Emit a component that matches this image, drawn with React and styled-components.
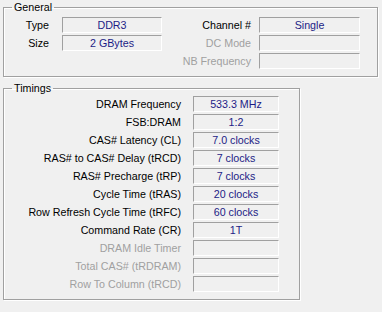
import React from "react";
import styled, { createGlobalStyle } from "styled-components";

const Global = createGlobalStyle`
  html, body { margin: 0; padding: 0; background: #f0f0f0; }
  body { font-family: "Liberation Sans", Arial, sans-serif; font-size: 10.7px; }
`;

const Page = styled.div`
  width: 382px;
  height: 312px;
  background: #f0f0f0;
  padding: 1px 0 0 3px;
  box-sizing: border-box;
  display: flex;
  flex-direction: column;
  gap: 5px;
`;

const Group = styled.fieldset`
  margin: 0;
  padding: 0;
  width: ${(p) => p.$w}px;
  height: ${(p) => p.$h}px;
  box-sizing: border-box;
  border: 1px solid #a0a0a0;
  box-shadow: inset 1px 1px 0 #fff, 1px 1px 0 #fff;
  min-width: 0;
`;

const Legend = styled.legend`
  margin-left: 8px;
  padding: 0 2px;
  font-size: 10.7px;
  line-height: 13px;
  color: #000;
`;

const GeneralGrid = styled.div`
  display: grid;
  grid-template-columns: 45px 113px 89px 109px;
  grid-auto-rows: 16px;
  row-gap: 2px;
  padding-top: 3px;
`;

const TimingsGrid = styled.div`
  display: grid;
  grid-template-columns: 177px 98px;
  grid-auto-rows: 16px;
  row-gap: 2px;
  padding-top: 1px;
`;

const Label = styled.div`
  text-align: right;
  line-height: 16px;
  white-space: nowrap;
  color: ${(p) => (p.$off ? "#a0a0a0" : "#000")};
`;

const Field = styled.div`
  box-sizing: border-box;
  height: 16px;
  border-top: 1px solid #a0a0a0;
  border-left: 1px solid #a0a0a0;
  border-right: 1px solid #fff;
  border-bottom: 1px solid #fff;
  background: #f0f0f0;
  color: #1c1c86;
  text-align: center;
  line-height: 14px;
  white-space: nowrap;
  margin-left: ${(p) => p.$ml || 0}px;
`;

const Empty = styled.div``;

const timings = [
  ["DRAM Frequency", "533.3 MHz"],
  ["FSB:DRAM", "1:2"],
  ["CAS# Latency (CL)", "7.0 clocks"],
  ["RAS# to CAS# Delay (tRCD)", "7 clocks"],
  ["RAS# Precharge (tRP)", "7 clocks"],
  ["Cycle Time (tRAS)", "20 clocks"],
  ["Row Refresh Cycle Time (tRFC)", "60 clocks"],
  ["Command Rate (CR)", "1T"],
  ["DRAM Idle Timer", "", true],
  ["Total CAS# (tRDRAM)", "", true],
  ["Row To Column (tRCD)", "", true],
];

export default function App() {
  return (
    <>
      <Global />
      <Page>
        <Group $w={375} $h={76}>
          <Legend>General</Legend>
          <GeneralGrid>
            <Label>Type</Label>
            <Field $ml={13}>DDR3</Field>
            <Label>Channel #</Label>
            <Field $ml={8}>Single</Field>

            <Label>Size</Label>
            <Field $ml={13}>2 GBytes</Field>
            <Label $off>DC Mode</Label>
            <Field $ml={8}></Field>

            <Empty />
            <Empty />
            <Label $off>NB Frequency</Label>
            <Field $ml={8}></Field>
          </GeneralGrid>
        </Group>
        <Group $w={297} $h={218}>
          <Legend>Timings</Legend>
          <TimingsGrid>
            {timings.map(([l, v, off]) => (
              <React.Fragment key={l}>
                <Label $off={off}>{l}</Label>
                <Field $ml={12}>{v}</Field>
              </React.Fragment>
            ))}
          </TimingsGrid>
        </Group>
      </Page>
    </>
  );
}
